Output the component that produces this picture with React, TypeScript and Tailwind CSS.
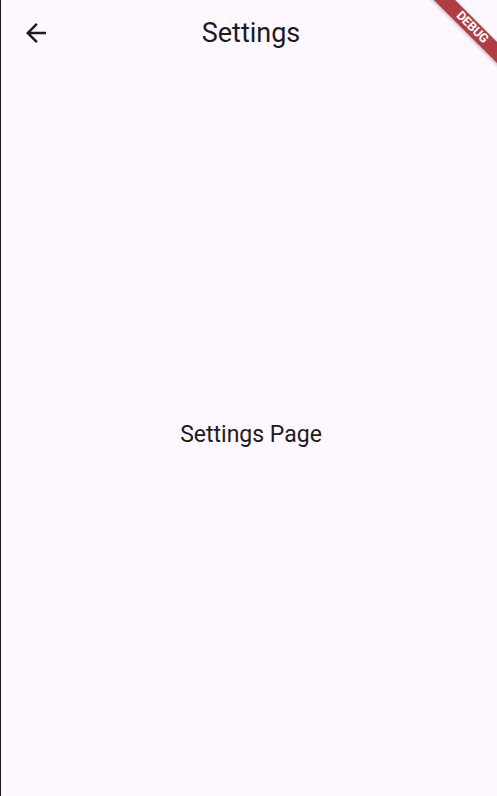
const BackArrow = () => (
  <svg width="30" height="30" viewBox="0 0 24 24" fill="#1d1b20">
    <path d="M20 11H7.83l5.59-5.59L12 4l-8 8 8 8 1.41-1.41L7.83 13H20v-2z" />
  </svg>
);

const DebugBanner = () => (
  <div className="pointer-events-none absolute top-0 right-0 w-[90px] h-[90px] overflow-hidden">
    <div className="absolute top-[20px] left-[-5px] w-[140px] h-[15px] rotate-45 bg-[#ad3f44] shadow-[0_1px_4px_rgba(0,0,0,0.3)] flex items-center justify-center">
      <span className="text-[12.5px] font-bold text-white tracking-[-0.2px] leading-none">DEBUG</span>
    </div>
  </div>
);

export default function App() {
  return (
    <div
      className="relative w-full h-[796px] bg-[#fef7ff] border-l border-[#1d1b20] flex flex-col text-[#1d1b20]"
      style={{ fontFamily: "Roboto, 'Noto Sans', sans-serif" }}
    >
      <header className="relative h-[66px] pl-[4px] flex items-center justify-center shrink-0">
        <button className="absolute left-[20px] top-[18px] w-[30px] h-[30px] flex items-center justify-center">
          <BackArrow />
        </button>
        <h1 className="text-[27px] leading-none">Settings</h1>
      </header>
      <main className="flex-1 pl-[4px] pt-[6px] flex items-center justify-center">
        <p className="text-[23px] leading-none">Settings Page</p>
      </main>
      <DebugBanner />
    </div>
  );
}
